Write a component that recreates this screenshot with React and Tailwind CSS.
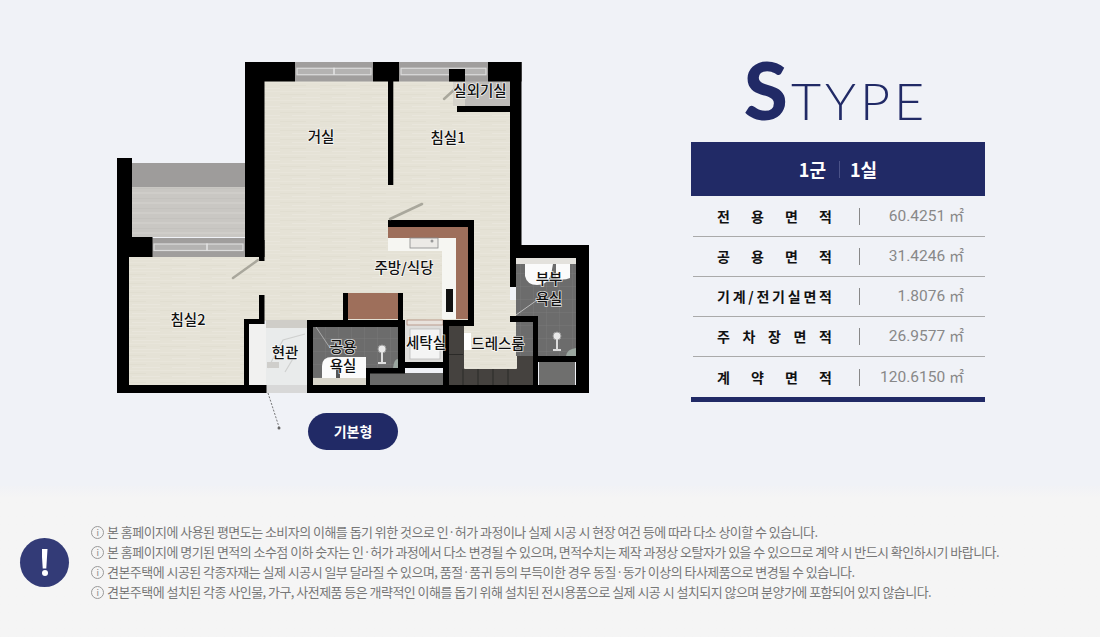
// black wall pieces of the plan: [x, y, w, h]
const walls = [
  [245, 62, 50, 19.5], [245, 62, 19.5, 195], [259, 240, 5.5, 21], [259, 295, 5.5, 29],
  [117, 158, 15, 80], [117, 237, 35.5, 20], [117, 237, 12, 156], [117, 385, 149.5, 8],
  [244, 319, 20, 5], [244, 319, 5, 70],
  [373, 62, 26, 19.5], [388, 81, 5.3, 104], [449, 69, 16, 12.5],
  [488, 62, 33.5, 19.5], [510, 62, 11.5, 183], [457, 106, 53, 6],
  [388, 220, 86, 7], [468, 220, 6, 106], [510, 245, 79, 13], [510, 245, 6, 42],
  [576, 245, 13, 148], [343, 293, 5, 34], [398, 293, 5, 34], [313, 320, 90, 7],
  [307, 320, 6, 73], [398, 320, 7, 53], [366, 368, 39, 5.5], [366, 368, 4, 25],
  [405, 362, 44, 6], [443, 320, 6, 73], [443, 320, 31, 6],
  [510, 316, 28, 6], [533, 316, 5, 77], [538, 356, 38, 6], [307, 385, 282, 8],
];

function Win({ x, y, w, h, split }) {
  const mid = y + h / 2;
  return (
    <g>
      <rect x={x} y={y} width={w} height={h} fill="#a09e9d" />
      <rect x={x + 2} y={mid - 3.5} width={w - 4} height={6.5} fill="#b4b3b2" stroke="#dcdcdc" strokeWidth="1.2" />
      {split && <line x1={split} x2={split} y1={mid - 4} y2={mid + 3} stroke="#e4e4e4" strokeWidth="1.5" />}
    </g>
  );
}

function Label({ x, y, children }) {
  return (
    <text
      x={x}
      y={y}
      textAnchor="middle"
      fontSize="14.5"
      fontWeight="500"
      fill="#111"
      stroke="#fff"
      strokeOpacity="0.75"
      strokeWidth="1.6"
      style={{ paintOrder: 'stroke' }}
    >
      {children}
    </text>
  );
}

function Toilet({ x, y }) {
  return (
    <g>
      <circle cx={x} cy={y} r="4" fill="#e8e8e8" stroke="#999" strokeWidth="1" />
      <rect x={x - 1} y={y + 3} width="2" height="11" fill="#ddd" />
      <rect x={x - 4} y={y + 13} width="8" height="2" fill="#ddd" />
    </g>
  );
}

function FloorPlan() {
  return (
    <svg
      viewBox="110 55 490 358"
      className="w-[490px] h-[358px] overflow-visible block"
      style={{ fontFamily: '"Noto Sans CJK KR", sans-serif' }}
    >
      <defs>
        <pattern id="floor" width="40" height="9" patternUnits="userSpaceOnUse">
          <rect width="40" height="9" fill="#e5e2d6" />
          <rect y="1" width="40" height="1" fill="#e8e5da" />
          <rect y="4" width="26" height="1" fill="#e1ded1" />
          <rect x="12" y="7" width="28" height="1" fill="#e9e6dc" />
        </pattern>
        <pattern id="tile" width="13" height="13" patternUnits="userSpaceOnUse">
          <rect width="13" height="13" fill="#6c6c6c" />
          <path d="M13 0H0V13" fill="none" stroke="#7d7d7d" strokeWidth="0.7" />
        </pattern>
        <pattern id="deck" width="30" height="10" patternUnits="userSpaceOnUse">
          <rect width="30" height="10" fill="#c9c7c3" />
          <rect y="2" width="30" height="2" fill="#cfcdc9" />
          <rect y="8" width="30" height="1" fill="#c4c2be" />
        </pattern>
      </defs>

      {/* balcony */}
      <rect x="132" y="163" width="113" height="24" fill="#9e9c9b" />
      <rect x="132" y="187" width="113" height="50" fill="url(#deck)" />

      {/* floors */}
      <rect x="264" y="81" width="246" height="240" fill="url(#floor)" />
      <rect x="129" y="257" width="130" height="128" fill="url(#floor)" />
      <rect x="259" y="261" width="6" height="34" fill="url(#floor)" />
      <rect x="403" y="300" width="66" height="26" fill="url(#floor)" />
      <rect x="474" y="300" width="42" height="30" fill="url(#floor)" />
      <rect x="453" y="81" width="57" height="25" fill="#bdbbb8" />
      <rect x="453" y="81" width="12" height="25" fill="#d6d3cb" />

      {/* entrance */}
      <rect x="249" y="324" width="17" height="61" fill="#f1f1f0" />
      <rect x="266" y="320" width="41" height="65" fill="#e9ebeb" />
      <rect x="266" y="320" width="41" height="8" fill="#cfcdc8" />
      <path d="M268 368 L283 340 L305 334 M285 372 L297 352" fill="none" stroke="#cfd0cf" strokeWidth="1.2" />
      <rect x="267" y="362" width="12" height="6" fill="#cfcecb" />
      <rect x="266" y="385" width="41" height="8" fill="#d8d8d8" />
      <path d="M268 393 L279 427" fill="none" stroke="#555" strokeWidth="0.8" strokeDasharray="2 1.5" />
      <circle cx="279" cy="428" r="1.5" fill="#666" />

      {/* windows */}
      <Win x={295} y={62} w={78} h={19.5} split={334} />
      <Win x={399} y={62} w={89} h={19.5} />
      <Win x={152} y={238} w={93} h={19} split={207} />

      {/* kitchen */}
      <rect x="388" y="227" width="80" height="11" fill="#9e6f5b" />
      <rect x="456" y="238" width="12" height="81" fill="#9e6f5b" />
      <rect x="388" y="238" width="68" height="13" fill="#f6f6f2" />
      <rect x="442" y="238" width="14" height="81" fill="#f6f6f2" />
      <rect x="410" y="238" width="28" height="10" fill="#eceae6" stroke="#888" strokeWidth="0.8" />
      <circle cx="432" cy="241" r="1.5" fill="#999" />
      <rect x="446" y="289" width="7" height="23" fill="#111" />
      <rect x="348" y="293" width="50" height="26" fill="#9e6f5b" />

      {/* shared bathroom */}
      <rect x="313" y="327" width="85" height="51" fill="url(#tile)" />
      <rect x="313" y="378" width="53" height="7" fill="#d9d6cb" />
      <path d="M322 378 V366 Q322 357 332 357 H366 V378 Z" fill="#fbfbfb" />
      <rect x="336" y="366" width="4" height="12" fill="#555" />
      <Toilet x={382} y={349} />
      <path d="M393 368 Q394 359 398 359 V368 Z" fill="#9aa69f" />

      {/* laundry */}
      <rect x="405" y="320" width="38" height="42" fill="#dedddb" />
      <rect x="407" y="320" width="36" height="5" fill="#e8e2dc" stroke="#9e6f5b" strokeWidth="0.6" />
      <rect x="410" y="329" width="30" height="30" fill="#f4f4f4" stroke="#bbb" strokeWidth="0.8" />

      {/* storage */}
      <rect x="370" y="373" width="73" height="12" fill="#6a6a69" />
      <rect x="539" y="362" width="36" height="23" fill="#6f6f6e" />

      {/* dress room */}
      <rect x="449" y="326" width="84" height="59" fill="#45423f" />
      <rect x="464" y="322" width="53" height="47" rx="1" fill="url(#floor)" />
      <rect x="464" y="333" width="7" height="17" fill="#fff" />
      <path d="M463 369 V385 M478 369 V385 M493 369 V385 M508 369 V385" stroke="#2b2a28" strokeWidth="1" />
      <rect x="449" y="354" width="14" height="1" fill="#2b2a28" />

      {/* master bathroom */}
      <rect x="516" y="258" width="60" height="98" fill="url(#tile)" />
      <rect x="516" y="258" width="60" height="6" fill="#e4e2dd" />
      <path d="M525 264 V276 Q527 285 537 285 Q547 285 551 275 L553 264 Z" fill="#fbfbfb" />
      <path d="M556 264 V278 Q562 281 570 278 V264 Z" fill="#fbfbfb" />
      <Toilet x={557} y={336} />
      <path d="M566 356 Q567 349 576 348 V356 Z" fill="#9aa69f" />

      {walls.map(([x, y, w, h], i) => (
        <rect key={i} x={x} y={y} width={w} height={h} fill="#000" />
      ))}

      {/* door leaves */}
      <g stroke="#a9a79c" strokeWidth="2.5" strokeLinecap="round">
        <line x1="455" y1="89" x2="444" y2="99" />
        <line x1="390" y1="219" x2="422" y2="204" />
        <line x1="258" y1="260" x2="233" y2="278" />
      </g>
      <line x1="316" y1="327" x2="330" y2="348" stroke="#aaa" strokeWidth="1" />
      <line x1="516" y1="315" x2="540" y2="298" stroke="#bbb" strokeWidth="1" />

      <Label x={321} y={142}>거실</Label>
      <Label x={448} y={143}>침실1</Label>
      <Label x={480} y={96}>실외기실</Label>
      <Label x={404} y={273}>주방/식당</Label>
      <Label x={188} y={325}>침실2</Label>
      <Label x={285} y={358}>현관</Label>
      <Label x={343} y={352}>공용</Label>
      <Label x={343} y={371}>욕실</Label>
      <Label x={426} y={348}>세탁실</Label>
      <Label x={498} y={349}>드레스룸</Label>
      <Label x={549} y={284}>부부</Label>
      <Label x={549} y={304}>욕실</Label>
    </svg>
  );
}

const rows = [
  { chars: ['전', '용', '면', '적'], value: '60.4251' },
  { chars: ['공', '용', '면', '적'], value: '31.4246' },
  { chars: ['기', '계', '/', '전', '기', '실', '면', '적'], value: '1.8076' },
  { chars: ['주', '차', '장', '면', '적'], value: '26.9577' },
  { chars: ['계', '약', '면', '적'], value: '120.6150' },
];

const notes = [
  '본 홈페이지에 사용된 평면도는 소비자의 이해를 돕기 위한 것으로 인·허가 과정이나 실제 시공 시 현장 여건 등에 따라 다소 상이할 수 있습니다.',
  '본 홈페이지에 명기된 면적의 소수점 이하 숫자는 인·허가 과정에서 다소 변경될 수 있으며, 면적수치는 제작 과정상 오탈자가 있을 수 있으므로 계약 시 반드시 확인하시기 바랍니다.',
  '견본주택에 시공된 각종자재는 실제 시공시 일부 달라질 수 있으며, 품절·품귀 등의 부득이한 경우 동질·동가 이상의 타사제품으로 변경될 수 있습니다.',
  '견본주택에 설치된 각종 사인물, 가구, 사전제품 등은 개략적인 이해를 돕기 위해 설치된 전시용품으로 실제 시공 시 설치되지 않으며 분양가에 포함되어 있지 않습니다.',
];

export default function App() {
  return (
    <div className="w-[1100px] h-[637px] overflow-hidden flex flex-col bg-[#f0f2f7] font-['Noto_Sans_CJK_KR',sans-serif]">
      {/* Plan and area table */}
      <section className="h-[486px] flex pt-[55px] pl-[110px]">
        <div className="w-[490px]">
          <FloorPlan />
          <button className="ml-[198px] w-[90px] h-[37px] rounded-full bg-[#212a66] text-white text-[14px] font-bold">
            기본형
          </button>
        </div>

        <div className="ml-[91px] w-[294px]">
          <h1 className="-mt-[6px] h-[93px] flex items-baseline justify-center pr-[4px] text-[#212a66] font-['Lato',sans-serif] leading-none">
            <span className="text-[80px] font-black">S</span>
            <span className="ml-[3px] text-[52px] font-light tracking-[4px]">TYPE</span>
          </h1>

          <div className="h-[54px] flex items-center justify-center bg-[#212a66] text-white text-[18px] font-bold">
            <span>1군</span>
            <span className="ml-[13px] mr-[10px] w-px h-[17px] bg-[#4a5288]" />
            <span>1실</span>
          </div>

          <div className="pt-px">
            {rows.map((row) => (
              <div key={row.value} className="h-10 flex items-center ml-[2px] border-b border-[#aaaaaa] last:border-b-0">
                <div className="ml-6 w-[115px] flex justify-between text-[14px] font-bold text-[#111]">
                  {row.chars.map((c, i) => (
                    <span key={i}>{c}</span>
                  ))}
                </div>
                <span className="ml-[27px] w-px h-[17px] bg-[#888888]" />
                <span className="ml-auto mr-[21px] text-[15.5px] text-[#888888] font-['Roboto','Noto_Sans_CJK_KR',sans-serif]">
                  {row.value} <span className="text-[15px] font-['Noto_Sans_CJK_KR',sans-serif]">㎡</span>
                </span>
              </div>
            ))}
          </div>
          <div className="h-[5px] bg-[#212a66]" />
        </div>
      </section>

      {/* Notice */}
      <section className="flex-1 flex items-center pl-5 bg-gradient-to-b from-[#f1f2f6] to-[#f5f5f5] to-[8%] pt-[1px]">
        <div className="w-[49px] h-[49px] rounded-full bg-[#333b77] flex flex-col items-center justify-center shrink-0">
          <span className="w-[6px] h-[20px] bg-white [clip-path:polygon(0_0,100%_0,80%_100%,20%_100%)]" />
          <span className="w-[6px] h-[6px] mt-[1px] rounded-full bg-white" />
        </div>
        <ul className="ml-[22px] text-[13px] leading-[20px] text-[#777777] tracking-[-0.54px]">
          {notes.map((note) => (
            <li key={note} className="flex items-center whitespace-nowrap">
              <span className="w-[13px] h-[13px] mr-[3px] rounded-full border border-[#999999] flex items-center justify-center text-[9px] leading-none text-[#888888]">
                i
              </span>
              {note}
            </li>
          ))}
        </ul>
      </section>
    </div>
  );
}
